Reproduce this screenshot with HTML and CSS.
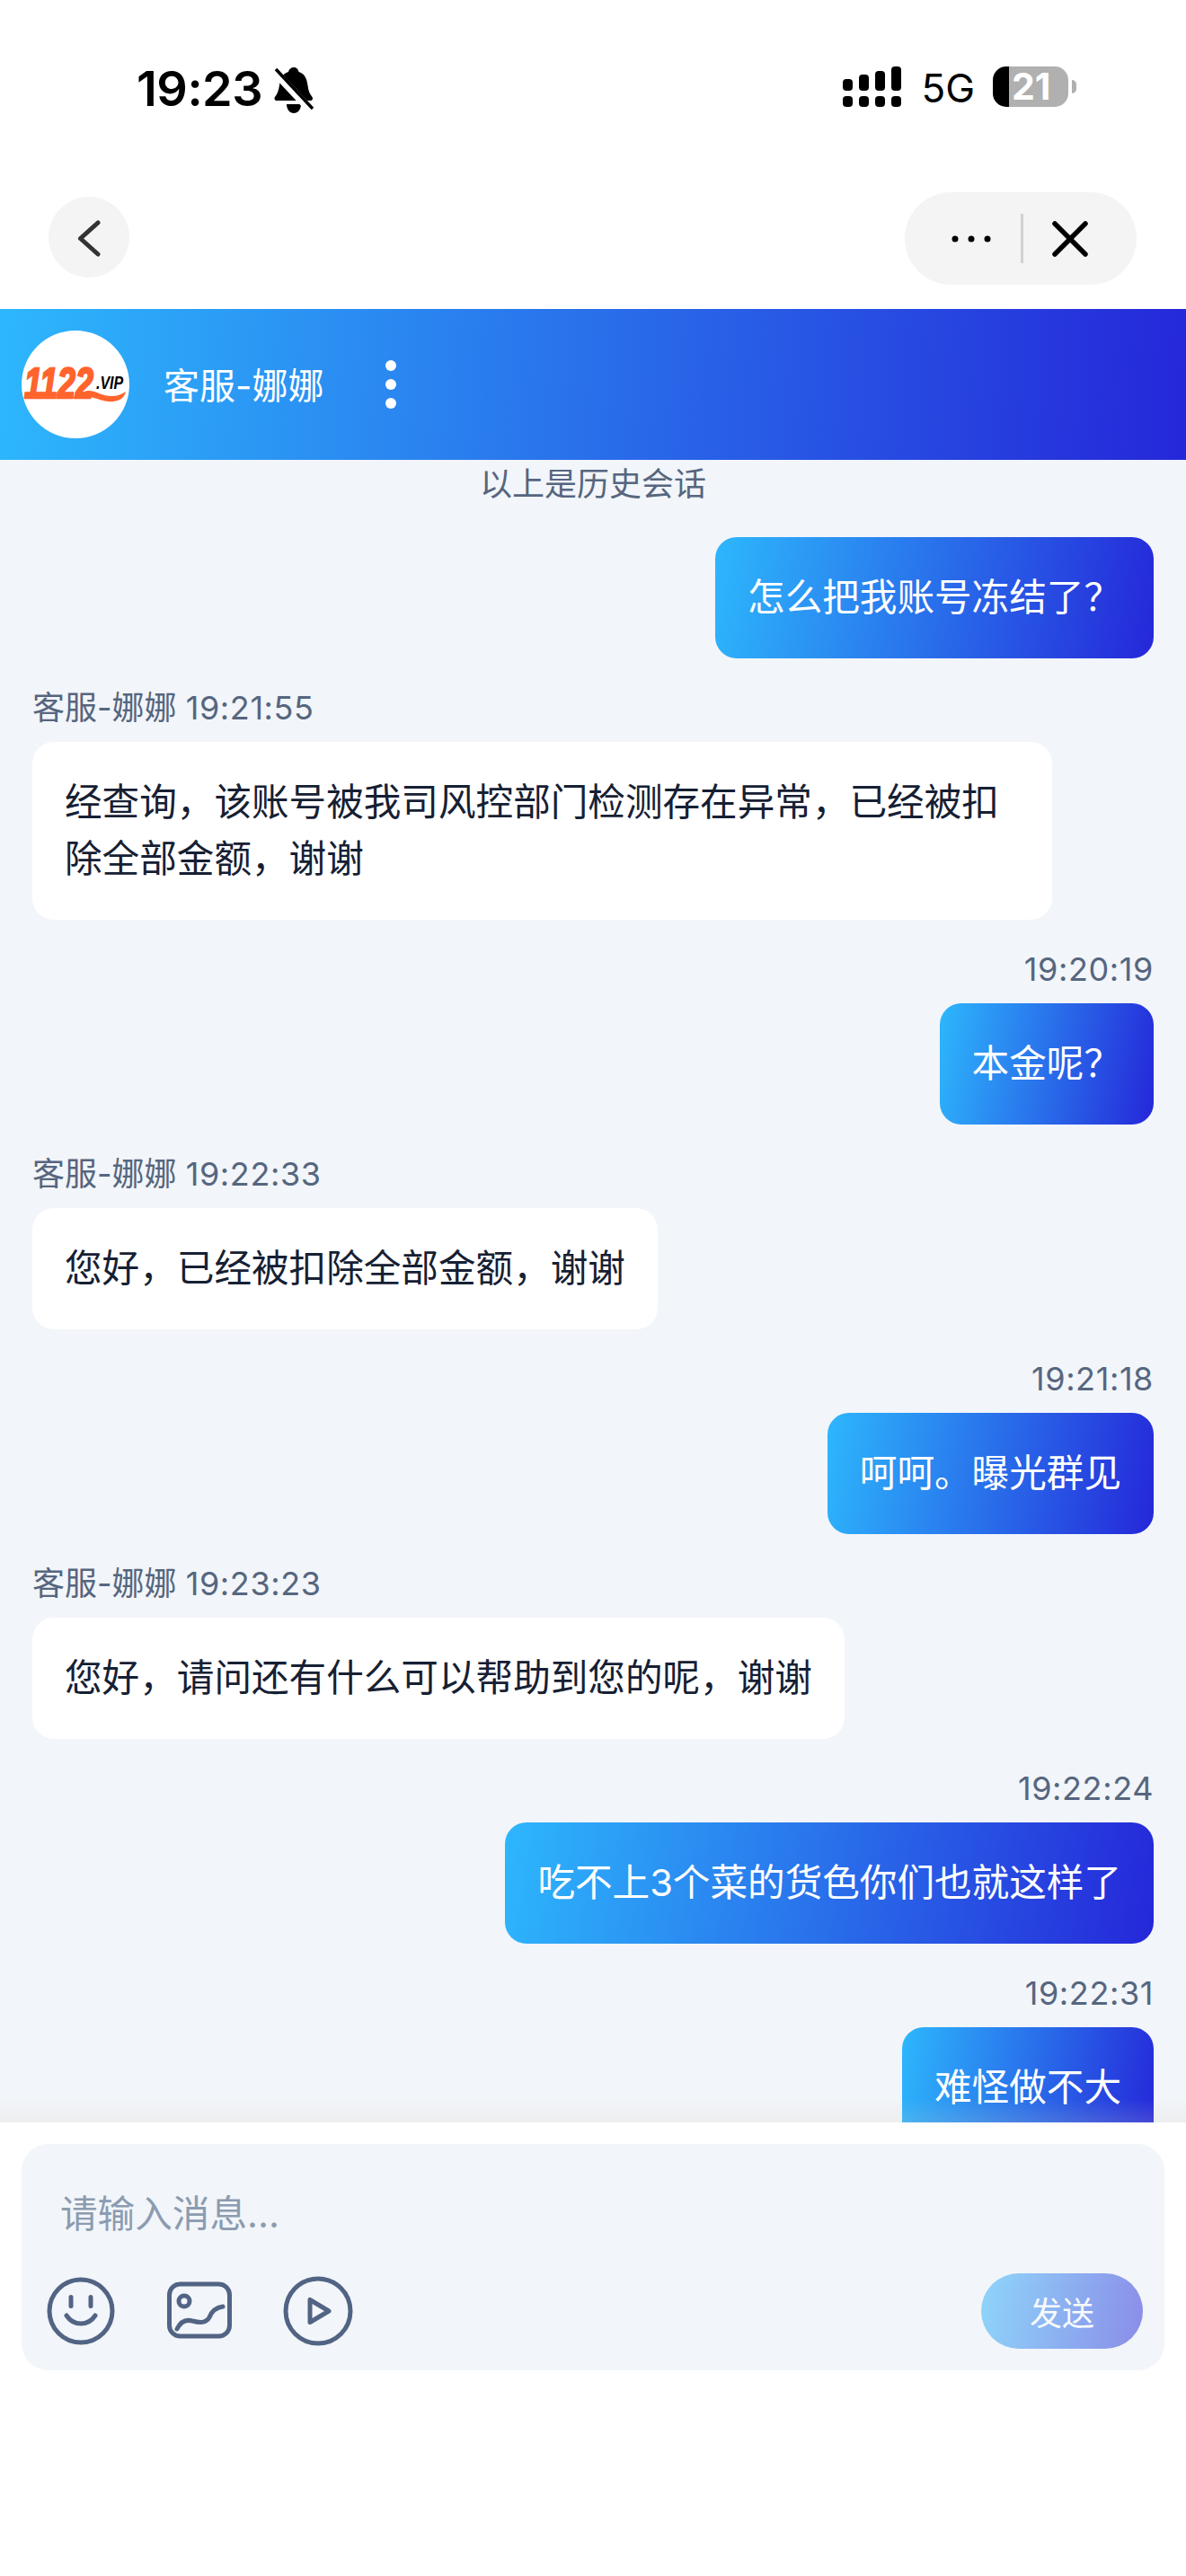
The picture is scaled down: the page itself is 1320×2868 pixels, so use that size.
FILE: index.html
```html
<!DOCTYPE html>
<html lang="zh-CN">
<head>
  <meta charset="UTF-8">
  <meta name="viewport" content="width=device-width, initial-scale=1.0">
  <title>客服-娜娜</title>
  <link rel="stylesheet" href="styles.css">
</head>
<body>

<div class="statusbar">
  <div class="status-left">
    <span class="clock">19:23</span>
    <svg class="bell" width="44" height="54" viewBox="0 0 44 54">
      <path d="M22 1c3 0 5 2 5.500 5 7 2 9 8 10 15 .6 6 2.500 10 5 13 1 1.500 .5 4-2 4H3c-2.500 0-3-2.500-2-4 2.500-3 4-7 5-13 1-7 3-13 10-15C16.500 3 19 1 22 1z" fill="#000"/>
      <path d="M14 42h16c0 6-3.500 10-8 10s-8-4-8-10z" fill="#000"/>
      <path d="M-1 4L42 50" stroke="#fff" stroke-width="9"/>
      <path d="M2 3L43 47" stroke="#000" stroke-width="3.500"/>
    </svg>
  </div>
  <div class="status-right">
    <div class="signal">
      <i class="bar b1"></i><i class="bar b2"></i><i class="bar b3"></i><i class="bar b4"></i>
      <i class="dot"></i><i class="dot"></i><i class="dot"></i><i class="dot"></i>
    </div>
    <span class="net">5G</span>
    <div class="battery"><span class="battery-level">21</span></div>
    <i class="battery-tip"></i>
  </div>
</div>

<div class="navbar">
  <button class="back">
    <svg width="90" height="90" viewBox="0 0 90 90"><path d="M55 29L35.500 46.500 55 64" fill="none" stroke="#333" stroke-width="5" stroke-linecap="round" stroke-linejoin="round"/></svg>
  </button>
  <div class="capsule">
    <svg width="44" height="8" viewBox="0 0 44 8"><circle cx="4" cy="4" r="3.500"/><circle cx="22" cy="4" r="3.500"/><circle cx="40" cy="4" r="3.500"/></svg>
    <i class="capsule-line"></i>
    <svg width="40" height="40" viewBox="0 0 40 40"><path d="M3 3L37 37M37 3L3 37" fill="none" stroke="#000" stroke-width="5.500" stroke-linecap="round"/></svg>
  </div>
</div>

<div class="header">
  <div class="avatar">
    <svg width="120" height="120" viewBox="0 0 120 120">
      <text class="logo-num" transform="translate(3 75) scale(0.73 1)">1122</text>
      <text class="logo-vip" transform="translate(83 65) scale(0.8 1)">.VIP</text>
      <path d="M52 75C62 74 68 66 76 67C84 68 90 73 100 73C106 73 112 71 116 68C115 74 110 78 102 79C92 80 84 75 76 74C68 73 62 77 52 75z" fill="#ff642d"/>
    </svg>
  </div>
  <span class="agent-name">客服-娜娜</span>
  <div class="more"><i></i><i></i><i></i></div>
</div>

<div class="chat">
  <div class="history">以上是历史会话</div>

  <div class="row mine">
    <div class="bubble">怎么把我账号冻结了？</div>
  </div>

  <div class="row">
    <div class="meta">客服-娜娜 <span class="time">19:21:55</span></div>
    <div class="bubble">经查询，该账号被我司风控部门检测存在异常，已经被扣除全部金额，谢谢</div>
  </div>

  <div class="row mine">
    <div class="meta"><span class="time">19:20:19</span></div>
    <div class="bubble">本金呢？</div>
  </div>

  <div class="row">
    <div class="meta">客服-娜娜 <span class="time">19:22:33</span></div>
    <div class="bubble">您好，已经被扣除全部金额，谢谢</div>
  </div>

  <div class="row mine">
    <div class="meta"><span class="time">19:21:18</span></div>
    <div class="bubble">呵呵。曝光群见</div>
  </div>

  <div class="row">
    <div class="meta">客服-娜娜 <span class="time">19:23:23</span></div>
    <div class="bubble">您好，请问还有什么可以帮助到您的呢，谢谢</div>
  </div>

  <div class="row mine">
    <div class="meta"><span class="time">19:22:24</span></div>
    <div class="bubble">吃不上3个菜的货色你们也就这样了</div>
  </div>

  <div class="row mine">
    <div class="meta"><span class="time">19:22:31</span></div>
    <div class="bubble">难怪做不大</div>
  </div>
</div>

<div class="footer">
  <div class="composer">
    <input class="msg-input" type="text" placeholder="请输入消息...">
    <div class="tools">
      <svg class="tool" width="80" height="80" viewBox="0 0 80 80">
        <circle cx="40" cy="40" r="35"/>
        <path d="M29 24.500v10M51 24.500v10M24 45c4 6 10 9 16 9s12-3 16-9"/>
      </svg>
      <svg class="tool" width="80" height="80" viewBox="0 0 80 80">
        <rect x="6.500" y="10" width="67" height="58" rx="12"/>
        <circle cx="23" cy="29" r="6"/>
        <path d="M15 60c4-8 10-11 17-9 8 2 15 3 19-4 3-8 8-11 15-12"/>
      </svg>
      <svg class="tool" width="80" height="80" viewBox="0 0 80 80">
        <circle cx="40" cy="40" r="36"/>
        <path d="M31 27.500v25L52 40z"/>
      </svg>
      <button class="send">发送</button>
    </div>
  </div>
</div>

</body>
</html>
```

FILE: styles.css
```css
* {
  box-sizing: border-box;
}

body {
  margin: 0;
  width: 1320px;
  height: 2868px;
  display: flex;
  flex-direction: column;
  overflow: hidden;
  background: #fff;
  font-family: Inter, "Noto Sans CJK SC", sans-serif;
}

.statusbar {
  height: 190px;
  padding: 74px 122px 0 152px;
  display: flex;
  justify-content: space-between;
  align-items: flex-start;
}

.status-left {
  display: flex;
  align-items: flex-start;
  gap: 13px;
}

.clock {
  font-size: 54px;
  line-height: 50px;
  font-weight: 600;
  letter-spacing: -0.5px;
  color: #000;
}

.status-right {
  display: flex;
  align-items: flex-start;
}

.signal {
  width: 65px;
  height: 45px;
  display: grid;
  grid-template-columns: repeat(4, 11px);
  grid-template-rows: 27px 12px;
  column-gap: 7px;
  row-gap: 6px;
  align-items: end;
  margin-right: 22px;
}

.bar,
.dot {
  display: block;
  background: #000;
  border-radius: 4px;
}

.dot {
  height: 12px;
}

.b1 { height: 13px; }
.b2 { height: 18px; }
.b3 { height: 22px; }
.b4 { height: 27px; }

.net {
  font-size: 44px;
  line-height: 48px;
  color: #000;
  margin-right: 20px;
}

.battery {
  width: 84px;
  height: 45px;
  border-radius: 15px;
  background: linear-gradient(to right, #000 18px, #b0b0b0 18px);
  padding-left: 21px;
}

.battery-level {
  display: block;
  font-size: 41px;
  line-height: 45px;
  font-weight: 700;
  color: #fff;
}

.battery-tip {
  width: 5px;
  height: 15px;
  margin: 15px 0 0 4px;
  background: #b0b0b0;
  border-radius: 0 6px 6px 0;
}

.navbar {
  height: 154px;
  padding: 24px 55px 0 54px;
  display: flex;
  justify-content: space-between;
  align-items: flex-start;
}

.back {
  width: 90px;
  height: 90px;
  margin-top: 5px;
  padding: 0;
  border: none;
  border-radius: 50%;
  background: #f4f4f4;
}

.back svg {
  display: block;
}

.capsule {
  width: 258px;
  height: 103px;
  border-radius: 52px;
  background: #f4f4f4;
  padding-left: 52px;
  display: flex;
  align-items: center;
}

.capsule-line {
  width: 3px;
  height: 55px;
  margin: 0 32px 0 33px;
  background: #d0d0d0;
}

.header {
  height: 168px;
  padding-left: 24px;
  display: flex;
  align-items: center;
  background: linear-gradient(94deg, #2db7fc, #2527d9);
}

.avatar {
  width: 120px;
  height: 120px;
  border-radius: 50%;
  background: #fff;
  overflow: hidden;
}

.avatar svg {
  display: block;
}

.logo-num {
  font-family: "Liberation Sans", sans-serif;
  font-size: 49px;
  font-weight: 700;
  font-style: italic;
  fill: #ff642d;
  stroke: #ff642d;
  stroke-width: 2.5px;
}

.logo-vip {
  font-family: "Liberation Sans", sans-serif;
  font-size: 20px;
  font-weight: 700;
  font-style: italic;
  fill: #000;
}

.agent-name {
  margin: -3px 0 0 38px;
  font-size: 40px;
  color: #fff;
}

.more {
  margin-left: 69px;
  display: flex;
  flex-direction: column;
  gap: 9px;
}

.more i {
  display: block;
  width: 12px;
  height: 12px;
  border-radius: 50%;
  background: #fff;
}

.chat {
  height: 1851px;
  overflow: hidden;
  padding: 0 36px;
  background: #f2f5f9;
}

.history {
  font-size: 36px;
  line-height: 54px;
  text-align: center;
  color: #56667f;
  margin-bottom: 32px;
}

.row {
  display: flex;
  flex-direction: column;
  align-items: flex-start;
  margin-bottom: 28px;
}

.row.mine {
  align-items: flex-end;
}

.meta {
  font-size: 36px;
  line-height: 54px;
  color: #56667f;
  margin-bottom: 11px;
}

.time {
  letter-spacing: 0.6px;
}

.bubble {
  max-width: 1135px;
  padding: 36px;
  border-radius: 24px;
  font-size: 41.6px;
  line-height: 63px;
  background: #fff;
  color: #162033;
}

.mine .bubble {
  background: linear-gradient(100deg, #2db7fc, #2527d9);
  color: #fff;
}

.footer {
  flex: 1;
  position: relative;
  padding: 24px;
  background: #fff;
}

/* grey fade over the bottom of the chat */
.footer::before {
  content: "";
  position: absolute;
  left: 0;
  right: 0;
  top: -26px;
  height: 26px;
  background: linear-gradient(rgba(210, 205, 190, 0), rgba(210, 205, 190, 0.18));
}

.composer {
  height: 252px;
  padding: 46px 24px 24px 26px;
  border-radius: 30px;
  background: #f2f5f9;
}

.msg-input {
  display: block;
  width: 100%;
  height: 63px;
  padding: 0 0 0 17px;
  margin-bottom: 35px;
  border: none;
  outline: none;
  background: transparent;
  font-family: inherit;
  font-size: 41.6px;
}

.msg-input::placeholder {
  color: #8c9bb0;
  opacity: 1;
}

.tools {
  display: flex;
  align-items: center;
  gap: 52px;
}

.tool {
  fill: none;
  stroke: #526484;
  stroke-width: 5;
  stroke-linecap: round;
  stroke-linejoin: round;
}

.send {
  width: 180px;
  height: 84px;
  margin-left: auto;
  border: none;
  border-radius: 42px;
  background: linear-gradient(100deg, #2db7fc, #2527d9);
  opacity: 0.5;
  color: #fff;
  font-family: inherit;
  font-size: 36px;
}
```
